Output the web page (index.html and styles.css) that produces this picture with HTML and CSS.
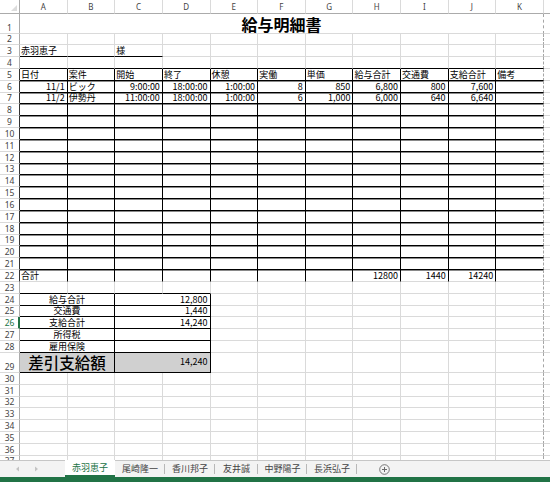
FILE: index.html
```html
<!DOCTYPE html>
<html lang="ja">
<head>
<meta charset="utf-8">
<title>給与明細書</title>
<link rel="stylesheet" href="styles.css">
</head>
<body>
<div class="app">
  <div class="sheet">
    <div class="grid">
      <div class="ch corner"><span class="tri"></span></div>
      <div class="ch">A</div><div class="ch">B</div><div class="ch">C</div><div class="ch">D</div><div class="ch">E</div><div class="ch">F</div><div class="ch">G</div><div class="ch">H</div><div class="ch">I</div><div class="ch">J</div><div class="ch">K</div><div class="ch">L</div>

      <div class="rn">1</div><div class="c s11 k title">給与明細書</div><div class="c"></div>
      <div class="rn">2</div><div class="c"></div><div class="c"></div><div class="c"></div><div class="c"></div><div class="c"></div><div class="c"></div><div class="c"></div><div class="c"></div><div class="c"></div><div class="c"></div><div class="c k"></div><div class="c"></div>
      <div class="rn">3</div><div class="c bb">赤羽恵子</div><div class="c bb"></div><div class="c bb">様</div><div class="c"></div><div class="c"></div><div class="c"></div><div class="c"></div><div class="c"></div><div class="c"></div><div class="c"></div><div class="c k"></div><div class="c"></div>
      <div class="rn">4</div><div class="c bb"></div><div class="c bb"></div><div class="c bb"></div><div class="c bb"></div><div class="c bb"></div><div class="c bb"></div><div class="c bb"></div><div class="c bb"></div><div class="c bb"></div><div class="c bb"></div><div class="c bb k"></div><div class="c"></div>
      <div class="rn tb">5</div><div class="c t">日付</div><div class="c t">案件</div><div class="c t">開始</div><div class="c t">終了</div><div class="c t">休憩</div><div class="c t">実働</div><div class="c t">単価</div><div class="c t">給与合計</div><div class="c t">交通費</div><div class="c t">支給合計</div><div class="c t k">備考</div><div class="c"></div>
      <div class="rn tb">6</div><div class="c t n">11/1</div><div class="c t">ビック</div><div class="c t n">9:00:00</div><div class="c t n">18:00:00</div><div class="c t n">1:00:00</div><div class="c t n">8</div><div class="c t n">850</div><div class="c t n">6,800</div><div class="c t n">800</div><div class="c t n">7,600</div><div class="c t k"></div><div class="c"></div>
      <div class="rn tb">7</div><div class="c t n">11/2</div><div class="c t">伊勢丹</div><div class="c t n">11:00:00</div><div class="c t n">18:00:00</div><div class="c t n">1:00:00</div><div class="c t n">6</div><div class="c t n">1,000</div><div class="c t n">6,000</div><div class="c t n">640</div><div class="c t n">6,640</div><div class="c t k"></div><div class="c"></div>
      <div class="rn tb">8</div><div class="c t"></div><div class="c t"></div><div class="c t"></div><div class="c t"></div><div class="c t"></div><div class="c t"></div><div class="c t"></div><div class="c t"></div><div class="c t"></div><div class="c t"></div><div class="c t k"></div><div class="c"></div>
      <div class="rn tb">9</div><div class="c t"></div><div class="c t"></div><div class="c t"></div><div class="c t"></div><div class="c t"></div><div class="c t"></div><div class="c t"></div><div class="c t"></div><div class="c t"></div><div class="c t"></div><div class="c t k"></div><div class="c"></div>
      <div class="rn tb">10</div><div class="c t"></div><div class="c t"></div><div class="c t"></div><div class="c t"></div><div class="c t"></div><div class="c t"></div><div class="c t"></div><div class="c t"></div><div class="c t"></div><div class="c t"></div><div class="c t k"></div><div class="c"></div>
      <div class="rn tb">11</div><div class="c t"></div><div class="c t"></div><div class="c t"></div><div class="c t"></div><div class="c t"></div><div class="c t"></div><div class="c t"></div><div class="c t"></div><div class="c t"></div><div class="c t"></div><div class="c t k"></div><div class="c"></div>
      <div class="rn tb">12</div><div class="c t"></div><div class="c t"></div><div class="c t"></div><div class="c t"></div><div class="c t"></div><div class="c t"></div><div class="c t"></div><div class="c t"></div><div class="c t"></div><div class="c t"></div><div class="c t k"></div><div class="c"></div>
      <div class="rn tb">13</div><div class="c t"></div><div class="c t"></div><div class="c t"></div><div class="c t"></div><div class="c t"></div><div class="c t"></div><div class="c t"></div><div class="c t"></div><div class="c t"></div><div class="c t"></div><div class="c t k"></div><div class="c"></div>
      <div class="rn tb">14</div><div class="c t"></div><div class="c t"></div><div class="c t"></div><div class="c t"></div><div class="c t"></div><div class="c t"></div><div class="c t"></div><div class="c t"></div><div class="c t"></div><div class="c t"></div><div class="c t k"></div><div class="c"></div>
      <div class="rn tb">15</div><div class="c t"></div><div class="c t"></div><div class="c t"></div><div class="c t"></div><div class="c t"></div><div class="c t"></div><div class="c t"></div><div class="c t"></div><div class="c t"></div><div class="c t"></div><div class="c t k"></div><div class="c"></div>
      <div class="rn tb">16</div><div class="c t"></div><div class="c t"></div><div class="c t"></div><div class="c t"></div><div class="c t"></div><div class="c t"></div><div class="c t"></div><div class="c t"></div><div class="c t"></div><div class="c t"></div><div class="c t k"></div><div class="c"></div>
      <div class="rn tb">17</div><div class="c t"></div><div class="c t"></div><div class="c t"></div><div class="c t"></div><div class="c t"></div><div class="c t"></div><div class="c t"></div><div class="c t"></div><div class="c t"></div><div class="c t"></div><div class="c t k"></div><div class="c"></div>
      <div class="rn tb">18</div><div class="c t"></div><div class="c t"></div><div class="c t"></div><div class="c t"></div><div class="c t"></div><div class="c t"></div><div class="c t"></div><div class="c t"></div><div class="c t"></div><div class="c t"></div><div class="c t k"></div><div class="c"></div>
      <div class="rn tb">19</div><div class="c t"></div><div class="c t"></div><div class="c t"></div><div class="c t"></div><div class="c t"></div><div class="c t"></div><div class="c t"></div><div class="c t"></div><div class="c t"></div><div class="c t"></div><div class="c t k"></div><div class="c"></div>
      <div class="rn tb">20</div><div class="c t"></div><div class="c t"></div><div class="c t"></div><div class="c t"></div><div class="c t"></div><div class="c t"></div><div class="c t"></div><div class="c t"></div><div class="c t"></div><div class="c t"></div><div class="c t k"></div><div class="c"></div>
      <div class="rn tb">21</div><div class="c t"></div><div class="c t"></div><div class="c t"></div><div class="c t"></div><div class="c t"></div><div class="c t"></div><div class="c t"></div><div class="c t"></div><div class="c t"></div><div class="c t"></div><div class="c t k"></div><div class="c"></div>
      <div class="rn tb">22</div><div class="c t nb">合計</div><div class="c t nb"></div><div class="c t nb"></div><div class="c t nb"></div><div class="c t nb"></div><div class="c t nb"></div><div class="c t nb"></div><div class="c t nb n">12800</div><div class="c t nb n">1440</div><div class="c t nb n">14240</div><div class="c t nb k"></div><div class="c"></div>
      <div class="rn">23</div><div class="c bb"></div><div class="c bb"></div><div class="c bb"></div><div class="c bb"></div><div class="c"></div><div class="c"></div><div class="c"></div><div class="c"></div><div class="c"></div><div class="c"></div><div class="c k"></div><div class="c"></div>
      <div class="rn">24</div><div class="c s2 sl">給与合計</div><div class="c s2 sv">12,800</div><div class="c"></div><div class="c"></div><div class="c"></div><div class="c"></div><div class="c"></div><div class="c"></div><div class="c k"></div><div class="c"></div>
      <div class="rn">25</div><div class="c s2 sl">交通費</div><div class="c s2 sv">1,440</div><div class="c"></div><div class="c"></div><div class="c"></div><div class="c"></div><div class="c"></div><div class="c"></div><div class="c k"></div><div class="c"></div>
      <div class="rn active">26</div><div class="c s2 sl">支給合計</div><div class="c s2 sv">14,240</div><div class="c"></div><div class="c"></div><div class="c"></div><div class="c"></div><div class="c"></div><div class="c"></div><div class="c k"></div><div class="c"></div>
      <div class="rn">27</div><div class="c s2 sl">所得税</div><div class="c s2 sv"></div><div class="c"></div><div class="c"></div><div class="c"></div><div class="c"></div><div class="c"></div><div class="c"></div><div class="c k"></div><div class="c"></div>
      <div class="rn">28</div><div class="c s2 sl">雇用保険</div><div class="c s2 sv"></div><div class="c"></div><div class="c"></div><div class="c"></div><div class="c"></div><div class="c"></div><div class="c"></div><div class="c k"></div><div class="c"></div>
      <div class="rn">29</div><div class="c s2 sl big gray">差引支給額</div><div class="c s2 sv gray mid">14,240</div><div class="c"></div><div class="c"></div><div class="c"></div><div class="c"></div><div class="c"></div><div class="c"></div><div class="c k"></div><div class="c"></div>
      <div class="rn">30</div><div class="c"></div><div class="c"></div><div class="c"></div><div class="c"></div><div class="c"></div><div class="c"></div><div class="c"></div><div class="c"></div><div class="c"></div><div class="c"></div><div class="c k"></div><div class="c"></div>
      <div class="rn">31</div><div class="c"></div><div class="c"></div><div class="c"></div><div class="c"></div><div class="c"></div><div class="c"></div><div class="c"></div><div class="c"></div><div class="c"></div><div class="c"></div><div class="c k"></div><div class="c"></div>
      <div class="rn">32</div><div class="c"></div><div class="c"></div><div class="c"></div><div class="c"></div><div class="c"></div><div class="c"></div><div class="c"></div><div class="c"></div><div class="c"></div><div class="c"></div><div class="c k"></div><div class="c"></div>
      <div class="rn">33</div><div class="c"></div><div class="c"></div><div class="c"></div><div class="c"></div><div class="c"></div><div class="c"></div><div class="c"></div><div class="c"></div><div class="c"></div><div class="c"></div><div class="c k"></div><div class="c"></div>
      <div class="rn">34</div><div class="c"></div><div class="c"></div><div class="c"></div><div class="c"></div><div class="c"></div><div class="c"></div><div class="c"></div><div class="c"></div><div class="c"></div><div class="c"></div><div class="c k"></div><div class="c"></div>
      <div class="rn">35</div><div class="c"></div><div class="c"></div><div class="c"></div><div class="c"></div><div class="c"></div><div class="c"></div><div class="c"></div><div class="c"></div><div class="c"></div><div class="c"></div><div class="c k"></div><div class="c"></div>
      <div class="rn">36</div><div class="c"></div><div class="c"></div><div class="c"></div><div class="c"></div><div class="c"></div><div class="c"></div><div class="c"></div><div class="c"></div><div class="c"></div><div class="c"></div><div class="c k"></div><div class="c"></div>
      <div class="rn">37</div><div class="c"></div><div class="c"></div><div class="c"></div><div class="c"></div><div class="c"></div><div class="c"></div><div class="c"></div><div class="c"></div><div class="c"></div><div class="c"></div><div class="c k"></div><div class="c"></div>
    </div>
  </div>
  <div class="tabbar">
    <div class="nav">
      <svg class="arr" width="5" height="6" viewBox="0 0 5 6"><path d="M4 0.5 L1 3 L4 5.5 Z" fill="#c4c4c4"/></svg>
      <svg class="arr" width="5" height="6" viewBox="0 0 5 6"><path d="M1 0.5 L4 3 L1 5.5 Z" fill="#c4c4c4"/></svg>
    </div>
    <div class="tab active">赤羽恵子</div>
    <div class="tab">尾崎隆一</div>
    <div class="tab">香川邦子</div>
    <div class="tab">友井誠</div>
    <div class="tab">中野陽子</div>
    <div class="tab">長浜弘子</div>
    <div class="add">
      <svg width="11" height="11" viewBox="0 0 11 11"><circle cx="5.5" cy="5.5" r="4.8" fill="none" stroke="#6a6a6a" stroke-width="0.9"/><path d="M5.5 3 V8 M3 5.5 H8" stroke="#6a6a6a" stroke-width="1"/></svg>
    </div>
  </div>
  <div class="status"></div>
</div>
</body>
</html>
```

FILE: styles.css
```css
* { box-sizing: border-box; }
html, body { margin: 0; padding: 0; background: #fff; }
body {
  width: 550px;
  height: 482px;
  overflow: hidden;
  font-family: "Noto Sans CJK JP", "Noto Sans", sans-serif;
}
.app {
  display: flex;
  flex-direction: column;
  height: 482px;
}
.sheet {
  height: 460px;
  overflow: hidden;
  flex: none;
}
.grid {
  display: grid;
  grid-template-columns: 20px repeat(12, 47.64px);
  grid-template-rows: 14px 19.5px repeat(27, 11.83px) 20px repeat(8, 11.83px);
  width: 591.7px;
}

/* column headers */
.ch {
  font-family: "Noto Sans", sans-serif;
  font-size: 8px;
  color: #444;
  line-height: 13px;
  text-align: center;
  border-bottom: 1px solid #ababab;
  border-right: 1px solid #dadada;
}
.ch.corner {
  border-right: 1px solid #ababab;
  position: relative;
}
.tri {
  position: absolute;
  right: 2px;
  bottom: 2px;
  width: 0;
  height: 0;
  border-left: 6px solid transparent;
  border-bottom: 6px solid #dcdcdc;
}

/* row headers */
.rn {
  font-family: "Noto Sans", sans-serif;
  font-size: 8.5px;
  color: #444;
  line-height: 10px;
  text-align: center;
  display: flex;
  align-items: flex-end;
  justify-content: center;
  border-right: 1px solid #ababab;
  border-bottom: 1px solid #dadada;
  overflow: hidden;
}
.rn.tb { border-right-color: #333; }
.rn.active {
  color: #217346;
  border-right: 2px solid #217346;
  padding-left: 1px;
}

/* cells */
.c {
  border-right: 1px solid #dadada;
  border-bottom: 1px solid #dadada;
  font-size: 9px;
  line-height: 10px;
  color: #000;
  padding-left: 1px;
  white-space: nowrap;
  overflow: hidden;
  display: flex;
  align-items: flex-end;
}
.s2 { grid-column: span 2; }
.s11 { grid-column: span 11; }

.c.k { border-right: 1px dashed #a6a6a6; }
.c.bb { border-bottom: 1px solid #000; }
.c.t {
  border-right: 1px solid #000;
  border-bottom: 1px solid #000;
  box-shadow: 0 1px 0 #8a8a8a;
}
.c.t.k { border-right: 1px dashed #a6a6a6; }
.c.t.nb { border-bottom: 1px solid #dadada; box-shadow: none; }
.c.n { justify-content: flex-end; padding-right: 2px; padding-left: 0; }

.c.title {
  justify-content: center;
  font-size: 16px;
  font-weight: bold;
  line-height: 18px;
  padding-left: 0;
  overflow: visible;
}

.c.sl {
  justify-content: center;
  border-right: 1px solid #000;
  border-bottom: 1px solid #000;
  padding-left: 0;
}
.c.sv {
  justify-content: flex-end;
  border-right: 1px solid #000;
  border-bottom: 1px solid #000;
  padding-right: 2px;
}
.c.gray { background: #d0d0d0; }
.c.big {
  font-size: 15.5px;
  font-weight: 500;
  line-height: 16px;
  align-items: center;
}
.c.mid { align-items: center; }

/* sheet tabs */
.tabbar {
  height: 17px;
  flex: none;
  background: #f3f3f3;
  border-top: 1px solid #c6c6c6;
  display: flex;
  align-items: stretch;
  font-size: 9px;
  color: #444;
}
.nav {
  width: 65px;
  display: flex;
  align-items: center;
  gap: 14px;
  padding-left: 15px;
}
.tab {
  display: flex;
  align-items: center;
  justify-content: center;
  width: 50px;
  position: relative;
  line-height: 12px;
}
.tab::after {
  content: "";
  position: absolute;
  right: 0;
  top: 3px;
  bottom: 3px;
  border-right: 1px solid #b8b8b8;
}
.tab:nth-of-type(5) { width: 43px; }
.tab:nth-of-type(6) { width: 49px; }
.tab.active {
  background: #fff;
  color: #217346;
  border-bottom: 2px solid #217346;
  margin-top: -1px;
  padding-top: 1px;
}
.tab.active::after { display: none; }
.add {
  width: 54px;
  display: flex;
  align-items: center;
  justify-content: center;
}
.status {
  height: 5px;
  flex: none;
  background: #217346;
}
```
